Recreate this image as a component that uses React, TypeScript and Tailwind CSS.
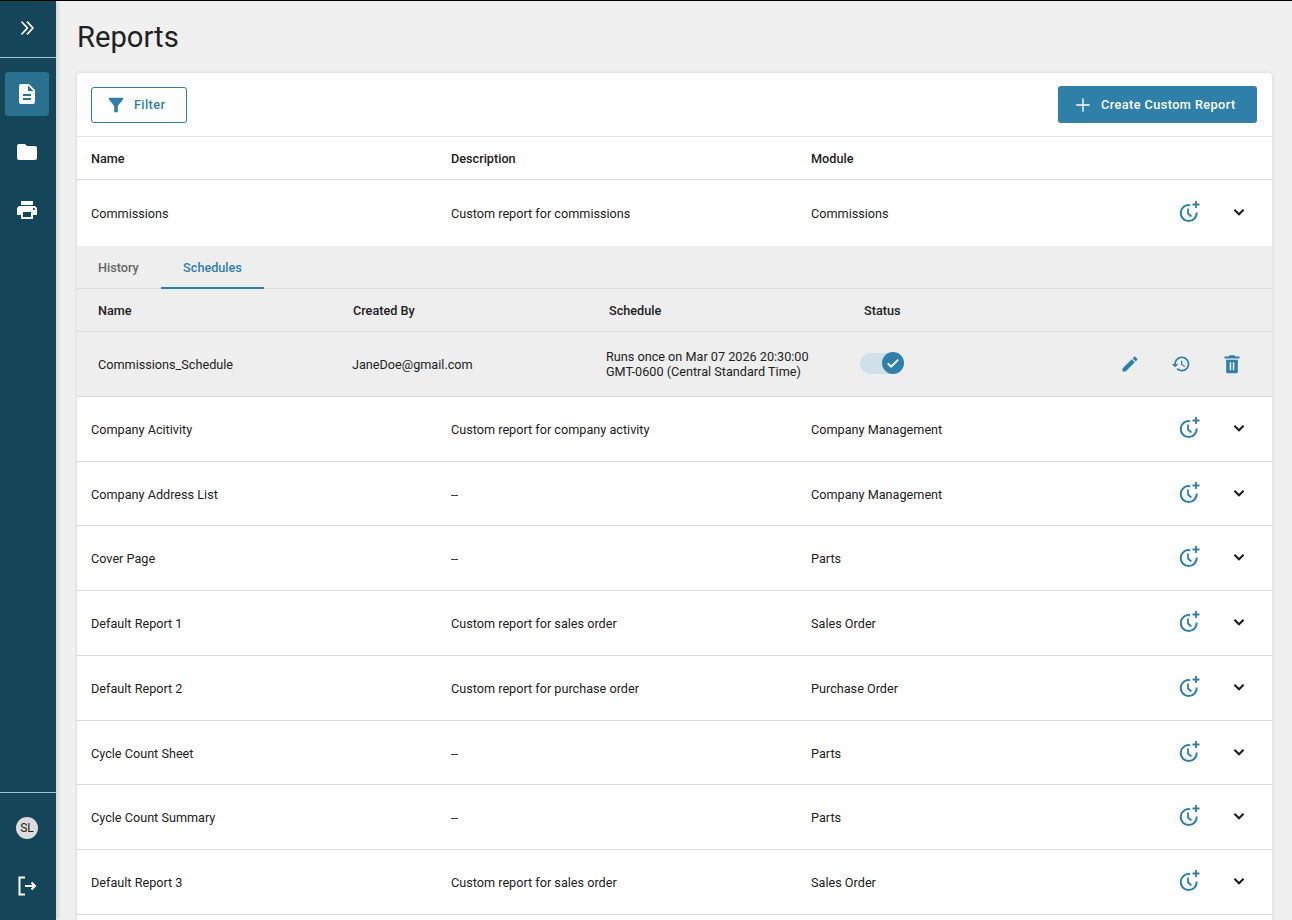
import { ReactNode } from "react";

const reports = [
  { name: "Company Acitivity", description: "Custom report for company activity", module: "Company Management" },
  { name: "Company Address List", description: "--", module: "Company Management" },
  { name: "Cover Page", description: "--", module: "Parts" },
  { name: "Default Report 1", description: "Custom report for sales order", module: "Sales Order" },
  { name: "Default Report 2", description: "Custom report for purchase order", module: "Purchase Order" },
  { name: "Cycle Count Sheet", description: "--", module: "Parts" },
  { name: "Cycle Count Summary", description: "--", module: "Parts" },
  { name: "Default Report 3", description: "Custom report for sales order", module: "Sales Order" },
];

function Icon({ d, className }: { d: string; className: string }) {
  return (
    <svg viewBox="0 0 24 24" fill="currentColor" fillRule="evenodd" className={className}>
      <path d={d} />
    </svg>
  );
}

const paths = {
  file: "M14 2H6c-1.1 0-1.99.9-1.99 2L4 20c0 1.1.89 2 1.99 2H18c1.1 0 2-.9 2-2V8l-6-6zm2 16H8v-2h8v2zm0-4H8v-2h8v2zm-3-5V3.5L18.5 9H13z",
  folder: "M10 4H4c-1.1 0-1.99.9-1.99 2L2 18c0 1.1.9 2 2 2h16c1.1 0 2-.9 2-2V8c0-1.1-.9-2-2-2h-8l-2-2z",
  print: "M19 8H5c-1.66 0-3 1.34-3 3v6h4v4h12v-4h4v-6c0-1.66-1.34-3-3-3zm-3 11H8v-5h8v5zm3-7c-.55 0-1-.45-1-1s.45-1 1-1 1 .45 1 1-.45 1-1 1zm-1-9H6v4h12V3z",
  filter: "M4.25 5.61C6.27 8.2 10 13 10 13v6c0 .55.45 1 1 1h2c.55 0 1-.45 1-1v-6s3.72-4.8 5.74-7.39c.51-.66.04-1.61-.79-1.61H5.04c-.83 0-1.3.95-.79 1.61z",
  edit: "M3 17.25V21h3.75L17.81 9.94l-3.75-3.75L3 17.25zM20.71 7.04c.39-.39.39-1.02 0-1.41l-2.34-2.34c-.39-.39-1.02-.39-1.41 0l-1.83 1.83 3.75 3.75 1.83-1.83z",
  history: "M13 3c-4.97 0-9 4.03-9 9H1l3.89 3.89.07.14L9 12H6c0-3.87 3.13-7 7-7s7 3.13 7 7-3.13 7-7 7c-1.93 0-3.68-.79-4.94-2.06l-1.42 1.42C8.27 19.99 10.51 21 13 21c4.97 0 9-4.03 9-9s-4.03-9-9-9zm-1 5v5l4.28 2.54.72-1.21-3.5-2.08V8H12z",
  trash: "M5 7h14v14.5a1.5 1.5 0 0 1-1.5 1.5h-11A1.5 1.5 0 0 1 5 21.5V7zM9.2 10v9.5h1.9V10H9.2zm3.7 0v9.5h1.9V10h-1.9zM21 3h-4.8l-1-1.5H8.8l-1 1.5H3v2.4h18V3z",
};

function ScheduleAdd() {
  return (
    <svg viewBox="0 0 24 24" fill="none" stroke="#2e80a8" strokeWidth="2" className="h-6 w-6">
      <path d="M13 5.2A8 8 0 1 0 19.7 12.5" />
      <path d="M11 8.5v5l3.4 3" strokeWidth="1.8" />
      <path d="M19 1v7M15.5 4.5h7" strokeWidth="1.8" />
    </svg>
  );
}

function ReportRow({ name, description, module, height, textPad = "pt-[1px]" }: { name: string; description: string; module: string; height: string; textPad?: string }) {
  return (
    <div className={`flex items-center border-b border-[#dcdcdc] pl-[14px] text-[12.67px] text-[#222] ${height}`}>
      <div className={`w-[360px] ${textPad}`}>{name}</div>
      <div className={`w-[360px] ${textPad}`}>{description}</div>
      <div className={`flex-1 ${textPad}`}>{module}</div>
      <div className="mr-[27px] -translate-y-[1px]">
        <ScheduleAdd />
      </div>
      <svg viewBox="0 0 24 24" fill="none" stroke="#1c1c1c" strokeWidth="2.2" className="mr-[22px] h-[22px] w-[22px] -translate-y-[1px]">
        <path d="M7 9.5l5 5 5-5" />
      </svg>
    </div>
  );
}

function NavButton({ children, active }: { children: ReactNode; active?: boolean }) {
  return (
    <div className={`mx-[5px] flex h-[44px] w-[44px] items-center justify-center rounded-[3px] text-white ${active ? "bg-[#2a7090]" : ""}`}>
      {children}
    </div>
  );
}

export default function App() {
  return (
    <div className="flex h-[920px] overflow-hidden border-t border-black bg-[#f0f0f0] font-['Roboto',sans-serif]">
      <aside className="flex w-[56px] shrink-0 flex-col bg-[#154559] shadow-[2px_0_4px_rgba(0,0,0,0.12)]">
        <div className="flex h-[57px] items-center justify-center border-b border-[#9fc4d2] text-white">
          <svg viewBox="0 0 24 24" fill="none" stroke="currentColor" strokeWidth="1.8" className="h-[22px] w-[22px] -translate-x-[1px] -translate-y-[1px]">
            <path d="M6 5l6.5 7L6 19M12 5l6.5 7L12 19" />
          </svg>
        </div>
        <div className="mt-[14px] flex flex-col gap-[14px]">
          <NavButton active>
            <Icon d={paths.file} className="h-6 w-6" />
          </NavButton>
          <NavButton>
            <Icon d={paths.folder} className="h-6 w-6" />
          </NavButton>
          <NavButton>
            <Icon d={paths.print} className="h-6 w-6" />
          </NavButton>
        </div>
        <div className="mt-auto flex h-[128px] flex-col items-center border-t border-[#9fc4d2]">
          <div className="mt-[24px] flex h-[22px] w-[22px] -translate-x-[1px] items-center justify-center rounded-full bg-[#dcdcdc] text-[12px] text-[#222]">
            SL
          </div>
          <svg viewBox="0 0 24 24" fill="none" stroke="white" strokeWidth="2" className="mt-[35px] h-6 w-6 -translate-x-[1px]">
            <path d="M10 3.5H4.5v17H10M10 12h10M16.5 8.5L20 12l-3.5 3.5" />
          </svg>
        </div>
      </aside>

      <main className="flex-1 pl-[21px] pr-[20px]">
        <h1 className="h-[72px] pt-[16px] text-[29.2px] leading-[40px] text-[#212121]">Reports</h1>
        <div className="min-h-[900px] rounded-t-[4px] bg-white shadow-[0_0_4px_rgba(0,0,0,0.12)]">
          <div className="flex h-[64px] items-center justify-between border-b border-[#e2e2e2] pl-[14px] pr-[15px]">
            <button className="flex h-[36px] w-[96px] items-center gap-[7px] rounded-[3px] border border-[#2e80a8] pl-[13px] text-[12.67px] font-medium tracking-[0.4px] text-[#2e80a8]">
              <Icon d={paths.filter} className="h-[22px] w-[22px]" />
              Filter
            </button>
            <button className="flex h-[37px] w-[199px] items-center gap-[9px] rounded-[3px] bg-[#2e80a8] pl-[16px] text-[12.67px] font-medium tracking-[0.45px] text-white">
              <svg viewBox="0 0 24 24" fill="none" stroke="currentColor" strokeWidth="1.8" className="h-[18px] w-[18px]">
                <path d="M12 3v18M3 12h18" />
              </svg>
              Create Custom Report
            </button>
          </div>

          <div className="flex h-[43px] items-center border-b border-[#dcdcdc] pl-[14px] pt-[1px] text-[12.67px] font-medium text-[#222]">
            <div className="w-[360px]">Name</div>
            <div className="w-[360px]">Description</div>
            <div>Module</div>
          </div>

          <ReportRow name="Commissions" description="Custom report for commissions" module="Commissions" height="h-[66px] border-b-0" textPad="" />

          <div className="bg-[#eeeeee] text-[12.67px] text-[#222]">
            <div className="flex h-[43px] border-b border-[#dcdcdc] pl-[21px] font-medium">
              <div className="flex w-[63px] items-center pt-[1px] text-[#666]">History</div>
              <div className="-mb-px flex w-[103px] items-center justify-center border-b-2 border-[#2e80a8] pt-[1px] text-[#2e80a8]">Schedules</div>
            </div>
            <div className="flex h-[43px] items-center border-b border-[#dcdcdc] pl-[21px] pt-[1px] font-medium">
              <div className="w-[255px]">Name</div>
              <div className="w-[256px]">Created By</div>
              <div className="w-[255px]">Schedule</div>
              <div>Status</div>
            </div>
            <div className="flex h-[64.9px] items-center border-b border-[#dcdcdc] pl-[21px]">
              <div className="w-[254px] pt-[1px]">Commissions_Schedule</div>
              <div className="w-[254px] pt-[1px]">JaneDoe@gmail.com</div>
              <div className="w-[254px] pt-[1px] leading-[15px]">
                Runs once on Mar 07 2026 20:30:00
                <br />
                GMT-0600 (Central Standard Time)
              </div>
              <div className="relative h-[21px] w-[44px] rounded-full bg-[#cfe0e8]">
                <div className="absolute -top-px right-0 flex h-[22px] w-[22px] items-center justify-center rounded-full bg-[#2e80a8] text-white">
                  <svg viewBox="0 0 24 24" fill="none" stroke="currentColor" strokeWidth="2.4" className="h-[18px] w-[18px]">
                    <path d="M5 12.5l4.5 4.5L19 7.5" />
                  </svg>
                </div>
              </div>
              <div className="ml-auto mr-[30px] flex items-center gap-[31px] text-[#2e80a8]">
                <Icon d={paths.edit} className="h-[20px] w-[20px]" />
                <Icon d={paths.history} className="h-[20px] w-[20px]" />
                <Icon d={paths.trash} className="h-[20px] w-[20px]" />
              </div>
            </div>
          </div>

          {reports.map((r) => (
            <ReportRow key={r.name} {...r} height="h-[64.78px]" />
          ))}
        </div>
      </main>
    </div>
  );
}
